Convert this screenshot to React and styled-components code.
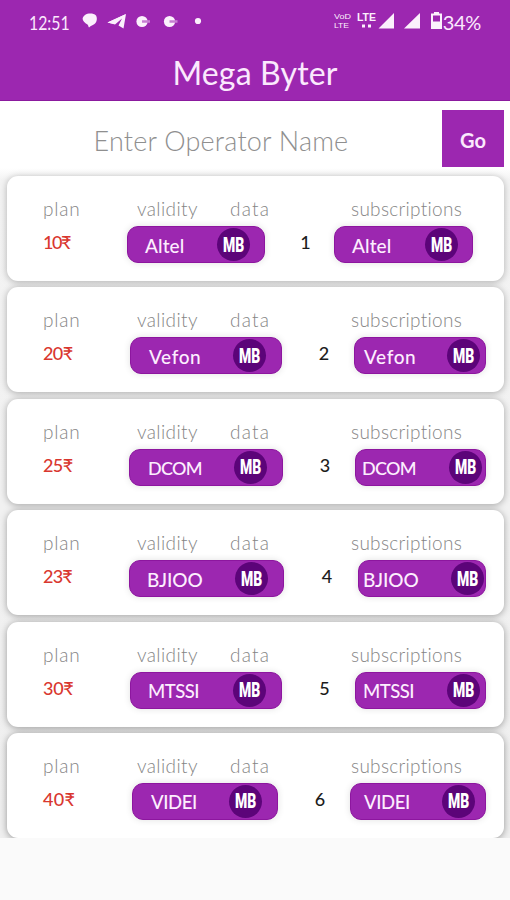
import React from "react";
import styled, { createGlobalStyle } from "styled-components";

const GlobalStyle = createGlobalStyle`
  body {
    margin: 0;
    background: #fafafa;
    font-family: Lato, "Open Sans", sans-serif;
    font-variant-ligatures: none;
  }
  * {
    box-sizing: border-box;
  }
`;

const Screen = styled.div`
  width: 510px;
  height: 900px;
  overflow: hidden;
  background: #fafafa;
`;

const Header = styled.header`
  height: 101px;
  background: #9c27b0;
  border-bottom: 1px solid #8b1a9e;
  color: #fbe9fd;
`;

const StatusBar = styled.div`
  display: flex;
  justify-content: space-between;
  height: 44px;
  padding: 0 29px 0 29px;
`;

const StatusGroup = styled.div`
  display: flex;
  align-items: center;
  height: 44px;
`;

const StatusText = styled.span`
  font-size: 20px;
  line-height: 44px;
  letter-spacing: -0.3px;
`;

const Clock = styled(StatusText)`
  width: 52px;
  letter-spacing: 0;
  transform: scaleX(0.79);
  transform-origin: left;
`;

const Title = styled.h1`
  margin: 0;
  text-align: center;
  font-size: 32px;
  font-weight: 400;
  line-height: 58px;
  letter-spacing: 0.15px;
`;

const SearchBar = styled.div`
  display: flex;
  align-items: flex-start;
  height: 67px;
  padding: 9px 6px 0 0;
  background: #fff;
`;

const Placeholder = styled.div`
  flex: 1;
  text-align: center;
  color: #8f8f8f;
  font-size: 27px;
  font-weight: 300;
  line-height: 62px;
  letter-spacing: 0.2px;
`;

const GoButton = styled.button`
  width: 62px;
  height: 57px;
  padding: 3px 0 0;
  border: 0;
  background: #9c27b0;
  color: #fbe9fd;
  font-family: inherit;
  font-size: 20px;
  font-weight: 700;
`;

const List = styled.div`
  display: flex;
  flex-direction: column;
  gap: 6.4px;
  height: 670px;
  padding: 8px 6px 0 7px;
  background: linear-gradient(#fff, #f3f3f3 12px, #efefef);
  overflow: hidden;
`;

const Card = styled.div`
  flex: none;
  height: 105px;
  border-radius: 11px;
  background: #fff;
  box-shadow: 0 1px 7px rgba(0, 0, 0, ${(props) => props.$depth});
`;

const Labels = styled.div`
  display: grid;
  grid-template-columns: 94px 93px 121px 1fr;
  height: 50px;
  padding: 19px 0 0 36px;
  color: #858585;
  font-size: 19px;
  font-weight: 300;
  line-height: 28px;
`;

const Label = styled.span`
  letter-spacing: ${(props) => props.$spacing}px;
`;

const Values = styled.div`
  display: flex;
  height: 37px;
`;

const Price = styled.span`
  flex: none;
  width: ${(props) => props.$width}px;
  padding-left: 36px;
  color: #d9372f;
  font-size: 18px;
  font-weight: 500;
  letter-spacing: ${(props) => props.$spacing}px;
  line-height: 32px;
`;

const Pill = styled.div`
  flex: none;
  display: flex;
  align-items: center;
  justify-content: space-between;
  width: ${(props) => props.$width}px;
  height: 37px;
  padding: 0 ${(props) => props.$right}px 0 ${(props) => props.$left}px;
  border: 1px solid #8d169f;
  border-radius: 11px;
  background: #9c27b0;
  box-shadow: 0 0 7px rgba(0, 0, 0, 0.12);
`;

const Name = styled.span`
  color: #fdeefe;
  font-size: ${(props) => props.$size || 19}px;
  font-weight: 500;
  line-height: 35px;
  padding-top: 2px;
  letter-spacing: ${(props) => props.$spacing}px;
`;

const Badge = styled.span`
  flex: none;
  display: flex;
  align-items: center;
  justify-content: center;
  width: 33px;
  height: 33px;
  border-radius: 50%;
  background: #5c0479;
  color: #fff;
  font-family: Roboto, sans-serif;
  font-size: 20.5px;
  font-weight: 900;

  b {
    transform: scaleX(0.68);
  }
`;

const Count = styled.span`
  flex: none;
  width: ${(props) => props.$width}px;
  padding-left: 12px;
  text-align: center;
  color: #1c1c1c;
  font-size: 18px;
  font-weight: 500;
  line-height: 32px;
`;

// pill and sub: width, left padding, right padding
const plans = [
  { price: "10", tight: -1.5, name: "Altel", spacing: 0.1, start: 120, pill: [138, 17, 14], gap: 69, sub: [139, 17, 14] },
  { price: "20", tight: -0.6, name: "Vefon", spacing: 0.6, start: 123, pill: [152, 18, 15], gap: 72, sub: [132, 9, 5] },
  { price: "25", tight: -0.6, name: "DCOM", size: 18, spacing: -0.7, start: 122, pill: [154, 18, 15], gap: 72, sub: [131, 6, 3] },
  { price: "23", tight: -0.8, name: "BJIOO", spacing: -0.1, start: 122, pill: [155, 17, 15], gap: 74, sub: [128, 4, 1] },
  { price: "30", tight: -0.3, name: "MTSSI", size: 18.5, spacing: -0.5, start: 123, pill: [152, 17, 15], gap: 73, sub: [131, 7, 5] },
  { price: "40", tight: 0.3, name: "VIDEI", size: 18.5, spacing: -0.4, start: 125, pill: [146, 18, 15], gap: 72, sub: [136, 13, 10] },
];

const NotificationIcons = () => (
  <svg width="126" height="24" viewBox="0 0 126 24" fill="#fbf0fc">
    <path d="M4 5c3-2 8.500-2 11 .5 1.500 2.500 1 6.500-1.500 8.500-1.500 1.200-3.500 1.500-5.500 3.500-.8-1-.5-2-1.500-3C2 12 -.5 8.500 4 5z" />
    <path d="M26.500 12.500 45 4l-2.500 14.500-5-3L41 8.500l-7 6z" />
    <path d="M26.500 12.500 45 4 33 14z" />
    <circle cx="61" cy="11.500" r="5.600" />
    <circle cx="88.500" cy="11.500" r="5.600" />
    <path d="M61 11.500h8M88.500 11.500h8" stroke="#c77dd2" strokeWidth="2.500" />
    <circle cx="117" cy="11" r="3.100" />
  </svg>
);

const SignalIcons = () => (
  <svg width="109" height="24" viewBox="0 0 109 24" fill="#fbf0fc">
    <g fontFamily="Liberation Sans, sans-serif">
      <text x="0" y="8.500" fontSize="7.500" textLength="17" lengthAdjust="spacingAndGlyphs">
        VoD
      </text>
      <text x="0" y="18" fontSize="8" textLength="15" lengthAdjust="spacingAndGlyphs">
        LTE
      </text>
      <text x="23" y="10.500" fontSize="11" fontWeight="700" textLength="19" lengthAdjust="spacingAndGlyphs">
        LTE
      </text>
    </g>
    <path d="M28 14.500h3v3h-3zM34 14.500h3v3h-3zM60 3v15.500H44.500zM86 3v15.500H70z" />
    <path
      fillRule="evenodd"
      d="M100 2h5v1.500h3V19H97V3.500h3zM99 5.500v6h7v-6z"
    />
  </svg>
);

const Operator = ({ plan, size }) => (
  <Pill $width={size[0]} $left={size[1]} $right={size[2]}>
    <Name $spacing={plan.spacing} $size={plan.size}>
      {plan.name}
    </Name>
    <Badge>
      <b>MB</b>
    </Badge>
  </Pill>
);

const PlanCard = ({ plan, index }) => {
  return (
    <Card $depth={0.28 + index * 0.02}>
      <Labels>
        <Label $spacing={0.8}>plan</Label>
        <Label $spacing={0.4}>validity</Label>
        <Label $spacing={1.2}>data</Label>
        <Label $spacing={0.3}>subscriptions</Label>
      </Labels>
      <Values>
        <Price $width={plan.start} $spacing={plan.tight}>
          {plan.price}₹
        </Price>
        <Operator plan={plan} size={plan.pill} />
        <Count $width={plan.gap}>{index + 1}</Count>
        <Operator plan={plan} size={plan.sub} />
      </Values>
    </Card>
  );
};

const App = () => {
  return (
    <>
      <GlobalStyle />
      <Screen>
        <Header>
          <StatusBar>
            <StatusGroup>
              <Clock>12:51</Clock>
              <NotificationIcons />
            </StatusGroup>
            <StatusGroup>
              <SignalIcons />
              <StatusText>34%</StatusText>
            </StatusGroup>
          </StatusBar>
          <Title>Mega Byter</Title>
        </Header>
        <SearchBar>
          <Placeholder>Enter Operator Name</Placeholder>
          <GoButton>Go</GoButton>
        </SearchBar>
        <List>
          {plans.map((plan, index) => (
            <PlanCard key={plan.name} plan={plan} index={index} />
          ))}
        </List>
      </Screen>
    </>
  );
};

export default App;
